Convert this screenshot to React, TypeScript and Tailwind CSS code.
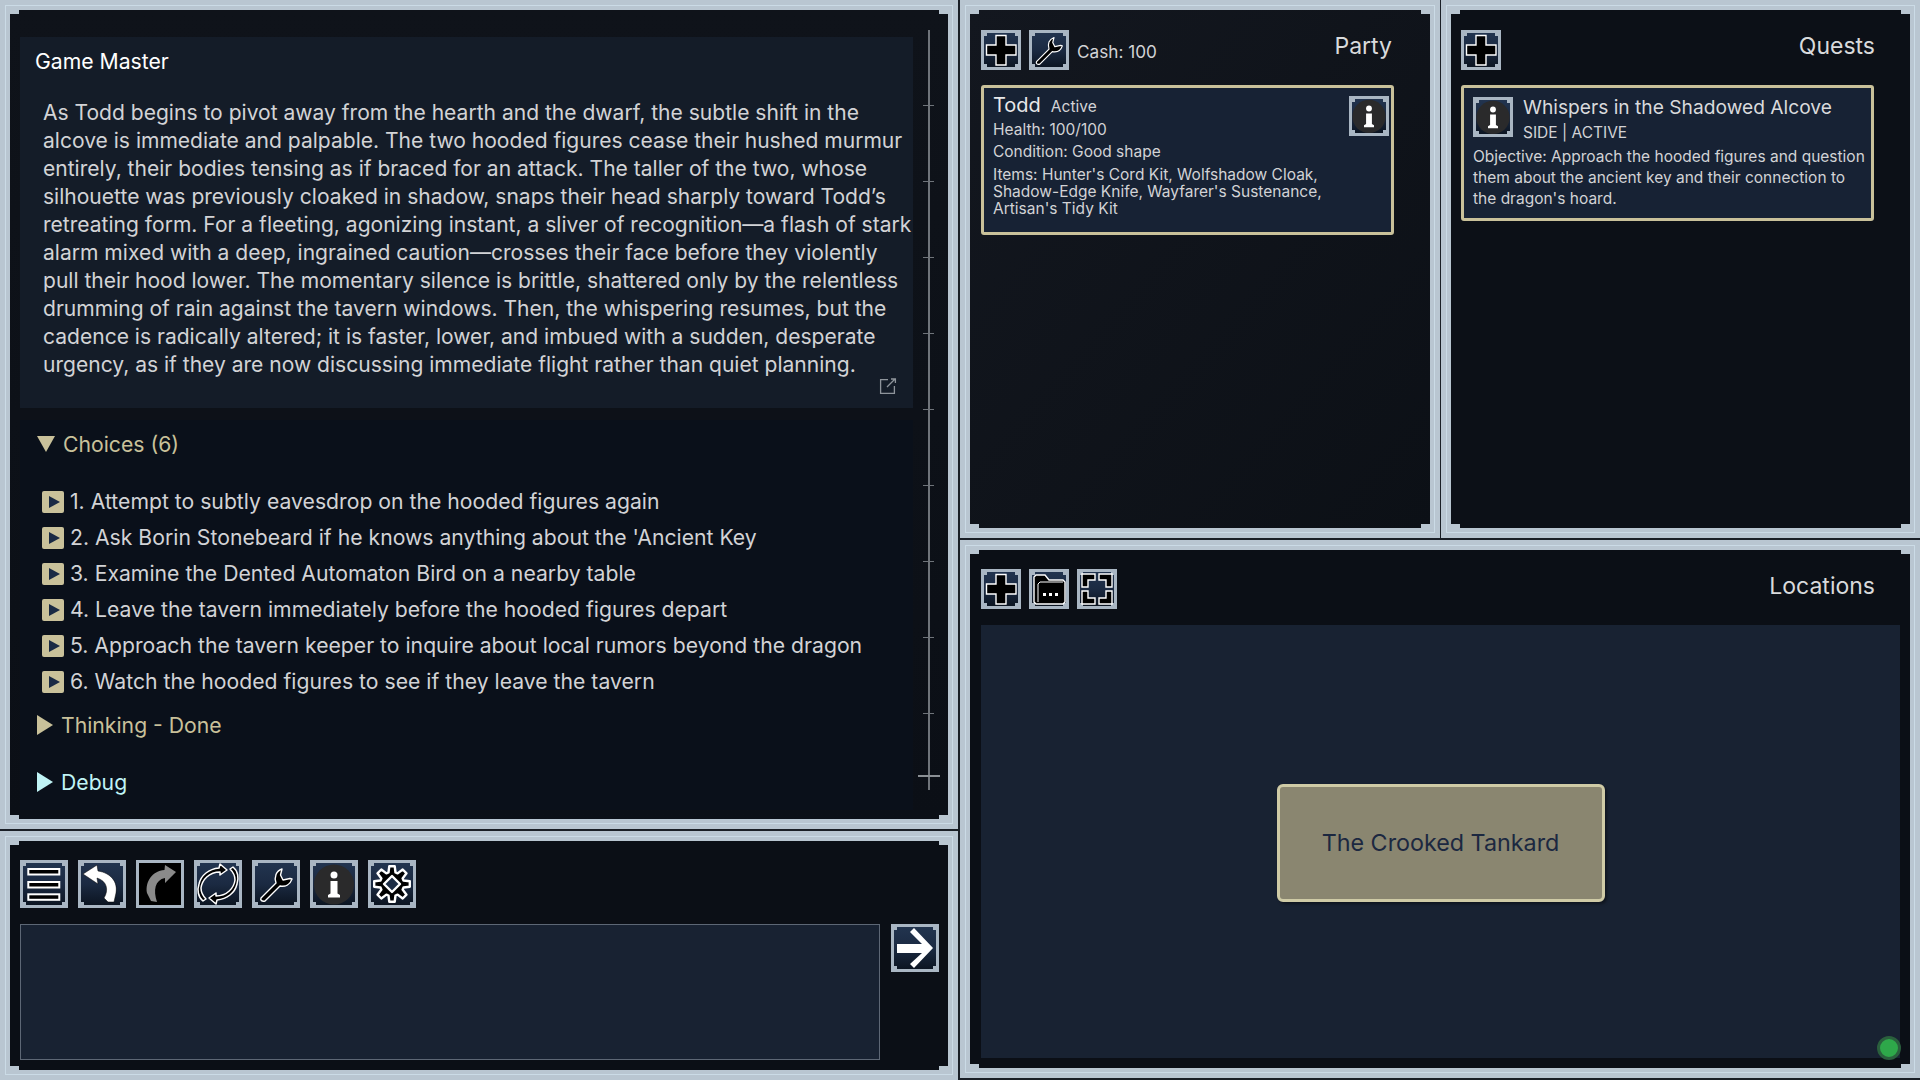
import React from "react"

const FONT = "font-['Inter','Noto_Sans',sans-serif]"

const storyLines = [
  "As Todd begins to pivot away from the hearth and the dwarf, the subtle shift in the",
  "alcove is immediate and palpable. The two hooded figures cease their hushed murmur",
  "entirely, their bodies tensing as if braced for an attack. The taller of the two, whose",
  "silhouette was previously cloaked in shadow, snaps their head sharply toward Todd’s",
  "retreating form. For a fleeting, agonizing instant, a sliver of recognition—a flash of stark",
  "alarm mixed with a deep, ingrained caution—crosses their face before they violently",
  "pull their hood lower. The momentary silence is brittle, shattered only by the relentless",
  "drumming of rain against the tavern windows. Then, the whispering resumes, but the",
  "cadence is radically altered; it is faster, lower, and imbued with a sudden, desperate",
  "urgency, as if they are now discussing immediate flight rather than quiet planning.",
]

const choices = [
  "1. Attempt to subtly eavesdrop on the hooded figures again",
  "2. Ask Borin Stonebeard if he knows anything about the 'Ancient Key",
  "3. Examine the Dented Automaton Bird on a nearby table",
  "4. Leave the tavern immediately before the hooded figures depart",
  "5. Approach the tavern keeper to inquire about local rumors beyond the dragon",
  "6. Watch the hooded figures to see if they leave the tavern",
]

function PlusIcon() {
  return (
    <svg viewBox="0 0 40 40" className="w-full h-full">
      <path d="M15 5.500h10v9.500h10v10H25v10H15v-10H5.500V15H15z" fill="#000" stroke="#fff" strokeWidth="1.400" />
    </svg>
  )
}

function WrenchIcon() {
  return (
    <svg viewBox="0 0 48 48" className="w-full h-full">
      <path d="M9 38L24 23C22 17 24 11 30 9L28.500 15L31 20L38 18.500L40 19C38 25 33 27 28 26L13 41C10 42 8 40 9 38z" fill="#000" stroke="#fff" strokeWidth="1.400" strokeLinejoin="round" />
    </svg>
  )
}

function InfoIcon() {
  return (
    <svg viewBox="0 0 48 48" className="w-full h-full">
      <circle cx="24" cy="24.500" r="20" fill="#2a2a2b" />
      <circle cx="24" cy="15" r="3.500" fill="#fff" />
      <path d="M20.500 21h7v12.500l2.500 1.500v2.500H18V35l2.500-1.500z" fill="#fff" />
    </svg>
  )
}

function MenuIcon() {
  return (
    <svg viewBox="0 0 48 48" className="w-full h-full">
      {[9, 22, 34.3].map((y) => (
        <rect key={y} x="8.300" y={y} width="31" height="5.500" fill="#000" stroke="#fff" strokeWidth="2" />
      ))}
    </svg>
  )
}

function UndoIcon() {
  return (
    <svg viewBox="0 0 48 48" className="w-full h-full">
      <path d="M5 14L19 5L20 11C33 13 40 22 38 33L36 42L30 42L26 38C31 30 29 21 19 18L20 24z" fill="#fff" stroke="#000" strokeWidth="0.500" />
    </svg>
  )
}

function RedoIcon() {
  return (
    <svg viewBox="0 0 48 48" className="w-full h-full">
      <path d="M40 12L29 5L28.500 10C16 11 9 22 11 33L15 41L21 42C17 30 19 20 29 18L29 23z" fill="#8a8a8a" />
    </svg>
  )
}

function RefreshIcon() {
  return (
    <svg viewBox="0 0 48 48" className="w-full h-full">
      <path d="M26 4l7 6-7 5v-3C15 12 8 20 7 28c0 4 2 8 5 11l-3 2C4 37 3 30 5 24 7 15 15 9 25 8z" fill="#000" stroke="#fff" strokeWidth="1.500" strokeLinejoin="round" />
      <path d="M22 44l-7-6 7-5v3c11 0 18-8 19-16 0-4-2-8-5-11l3-2c5 4 6 11 4 17-2 9-10 15-20 16z" fill="#000" stroke="#fff" strokeWidth="1.500" strokeLinejoin="round" />
    </svg>
  )
}

// eight tooth cog outline, points worked out from the angles
function gearPoints() {
  const pts: string[] = []
  for (let i = 0; i < 8; i++) {
    const a = (i * Math.PI) / 4 - Math.PI / 2
    const spots: [number, number][] = [[-0.3, 12], [-0.15, 18], [0.15, 18], [0.3, 12]]
    for (const [da, r] of spots) {
      pts.push(`${(24 + r * Math.cos(a + da)).toFixed(1)},${(24 + r * Math.sin(a + da)).toFixed(1)}`)
    }
  }
  return pts.join(" ")
}

function GearIcon() {
  return (
    <svg viewBox="0 0 48 48" className="w-full h-full">
      <polygon points={gearPoints()} fill="#000" stroke="#fff" strokeWidth="2.400" strokeLinejoin="round" />
      <path d="M24 16l8 8-8 8-8-8z" fill="#1d2d45" stroke="#fff" strokeWidth="2.400" strokeLinejoin="round" />
    </svg>
  )
}

function FolderIcon() {
  return (
    <svg viewBox="0 0 40 40" className="w-full h-full">
      <path d="M5 33V8l2-2h9l4 5h14l2 2v20l-2 2H7z" fill="#000" stroke="#fff" strokeWidth="1.400" />
      <path d="M9 33V15l2-2h23" fill="none" stroke="#fff" strokeWidth="1" />
      <rect x="14" y="24" width="3" height="3" fill="#fff" />
      <rect x="20" y="24" width="3" height="3" fill="#fff" />
      <rect x="26" y="24" width="3" height="3" fill="#fff" />
    </svg>
  )
}

function FocusIcon() {
  return (
    <svg viewBox="0 0 40 40" className="w-full h-full">
      <g fill="#000" stroke="#fff" strokeWidth="1.400">
        <path d="M5 5h13v6h-7v7H5z" />
        <path d="M35 5H22v6h7v7h6z" />
        <path d="M5 35h13v-6h-7v-7H5z" />
        <path d="M35 35H22v-6h7v-7h6z" />
      </g>
    </svg>
  )
}

function ArrowIcon() {
  return (
    <svg viewBox="0 0 48 48" className="w-full h-full">
      <path d="M6 20h25L19 8l4-4 19 20-19 20-4-4 12-11H6z" fill="#fff" />
    </svg>
  )
}

function IconButton({ children, size = "w-[48px] h-[48px]", dark = false }: { children: React.ReactNode; size?: string; dark?: boolean }) {
  return (
    <div className={`relative shrink-0 ${size} border-[3px] border-[#a9b6c3] ${dark ? "bg-black" : "bg-gradient-to-b from-[#22344f] via-[#1b2a42] to-[#0c1522]"}`}>
      {!dark && (
        <>
          <span className="absolute left-0 top-0 w-[3px] h-[3px] bg-[#a9b6c3]" />
          <span className="absolute right-0 top-0 w-[3px] h-[3px] bg-[#a9b6c3]" />
          <span className="absolute left-0 bottom-0 w-[3px] h-[3px] bg-[#a9b6c3]" />
          <span className="absolute right-0 bottom-0 w-[3px] h-[3px] bg-[#a9b6c3]" />
        </>
      )}
      <div className="absolute inset-[-3px]">{children}</div>
    </div>
  )
}

// light frame with stepped inner corners
function Panel({ className = "", children }: { className?: string; children: React.ReactNode }) {
  return (
    <div className={`relative border-[10px] border-[#b9c6d1] ${className}`}>
      <div className="absolute inset-[-5px] border border-[#cbdbe6] pointer-events-none" />
      <span className="absolute left-0 top-0 w-[9px] h-[4px] bg-[#b9c6d1]" />
      <span className="absolute right-0 top-0 w-[9px] h-[4px] bg-[#b9c6d1]" />
      <span className="absolute left-0 bottom-0 w-[9px] h-[4px] bg-[#b9c6d1]" />
      <span className="absolute right-0 bottom-0 w-[9px] h-[4px] bg-[#b9c6d1]" />
      {children}
    </div>
  )
}

function ScrollRail() {
  const ticks = [105, 181, 257, 333, 409, 485, 561, 637, 713]
  return (
    <div className="absolute left-[918px] top-[20px] w-[2px] h-[760px] bg-[#6f747a]">
      {ticks.map((y) => (
        <span key={y} className="absolute left-[-5px] w-[11px] h-[1px] bg-[#6f747a]" style={{ top: y - 30 }} />
      ))}
      <span className="absolute left-[-10px] top-[745px] w-[22px] h-[2px] bg-[#8a8f94]" />
    </div>
  )
}

export default function App() {
  return (
    <div className={`w-[1920px] h-[1080px] overflow-hidden bg-[#1a1f26] grid grid-cols-[958px_960px] gap-x-[2px] ${FONT}`}>
      {/* Left column */}
      <div className="flex flex-col gap-[2px] h-[1080px]">
        <Panel className="h-[829px] bg-gradient-to-b from-[#0f131a] to-[#0b0f16]">
          <div className="pl-[10px] pt-[27px]">
            <div className="w-[893px] h-[371px] bg-[#141c28] pl-[15px] pr-[2px]">
              <div className="pt-[9px] text-[21.2px] leading-[30px] text-white">Game Master</div>
              <p className="mt-[23px] pl-[8px] w-[876px] whitespace-nowrap text-[21.05px] leading-[28px] text-[#d2d3d6]">
                {storyLines.map((line) => (
                  <span key={line} className="block">{line}</span>
                ))}
              </p>
              <div className="flex justify-end pr-[14px] mt-[-2px]">
                <svg viewBox="0 0 18 18" className="w-[18px] h-[18px]" fill="none" stroke="#8e949b" strokeWidth="1.300">
                  <path d="M9 2.600H1.600v13.800h13.800V9" />
                  <path d="M8 10l8-8M12 2h4.400v4" />
                </svg>
              </div>
            </div>
            <div className="mt-[12px] w-[893px] h-[390px] bg-[#0a101a] pl-[16px]">
              <div className="flex items-center gap-[8px] pt-[10px] text-[21.2px] leading-[28px] text-[#c9c19a]">
                <span className="w-0 h-0 ml-[1px] border-x-[9px] border-x-transparent border-t-[16px] border-t-[#c9c19a]" />
                Choices (6)
              </div>
              <div className="mt-[30px] flex flex-col gap-[8px] pl-[6px]">
                {choices.map((c) => (
                  <div key={c} className="flex items-center h-[28px] gap-[6px] text-[21.2px] text-[#d2d3d6]">
                    <span className="flex items-center justify-center w-[22px] h-[22px] rounded-[2px] bg-[#c9c19a] shrink-0">
                      <span className="w-0 h-0 ml-[2px] border-y-[6px] border-y-transparent border-l-[11px] border-l-[#1a2a44]" />
                    </span>
                    {c}
                  </div>
                ))}
              </div>
              <div className="flex items-center gap-[8px] mt-[15px] text-[21.2px] leading-[28px] text-[#c9c19a]">
                <span className="w-0 h-0 ml-[1px] border-y-[10px] border-y-transparent border-l-[16px] border-l-[#c9c19a]" />
                Thinking - Done
              </div>
              <div className="flex items-center gap-[8px] mt-[29px] text-[21.2px] leading-[28px] text-[#c0f4f6]">
                <span className="w-0 h-0 ml-[1px] border-y-[10px] border-y-transparent border-l-[16px] border-l-[#c0f4f6]" />
                Debug
              </div>
            </div>
          </div>
          <ScrollRail />
        </Panel>
        <Panel className="h-[249px] bg-[#0b0f16]">
          <div className="pl-[10px] pt-[19px]">
            <div className="flex gap-[10px]">
              <IconButton><MenuIcon /></IconButton>
              <IconButton><UndoIcon /></IconButton>
              <IconButton dark><RedoIcon /></IconButton>
              <IconButton><RefreshIcon /></IconButton>
              <IconButton><WrenchIcon /></IconButton>
              <IconButton><InfoIcon /></IconButton>
              <IconButton><GearIcon /></IconButton>
            </div>
            <div className="flex gap-[11px] mt-[16px]">
              <div className="w-[860px] h-[136px] bg-[#182232] border border-[#5d6775]" />
              <IconButton><ArrowIcon /></IconButton>
            </div>
          </div>
        </Panel>
      </div>

      {/* Right column */}
      <div className="flex flex-col gap-[2px] h-[1078px]">
        <div className="grid grid-cols-[480px_479px] gap-x-[1px] h-[538px]">
          <Panel className="bg-gradient-to-br from-[#13171f] to-[#0c1016]">
            <div className="pl-[11px] pr-[38px] pt-[20px]">
              <div className="flex items-start">
                <div className="flex items-center gap-[8px]">
                  <IconButton size="w-[40px] h-[40px]"><PlusIcon /></IconButton>
                  <IconButton size="w-[40px] h-[40px]"><WrenchIcon /></IconButton>
                  <span className="text-[17.2px] text-[#d2d3d6] mt-[3px]">Cash: 100</span>
                </div>
                <span className="ml-auto mt-[1px] text-[23px] leading-[30px] text-[#d9dadc]">Party</span>
              </div>
              <div className="relative mt-[15px] w-[413px] h-[150px] rounded-[3px] border-[3px] border-[#c9c19a] bg-[#172234] pl-[9px] pt-[4px] text-[#d2d3d6]">
                <div className="flex items-baseline gap-[10px]">
                  <span className="text-[20px] leading-[27px] text-[#e8e8ea]">Todd</span>
                  <span className="text-[15.5px]">Active</span>
                </div>
                <div className="text-[15.5px] leading-[22px]">Health: 100/100</div>
                <div className="text-[15.5px] leading-[22px]">Condition: Good shape</div>
                <div className="text-[15.5px] leading-[17px] mt-[3px] w-[345px]">Items: Hunter's Cord Kit, Wolfshadow Cloak, Shadow-Edge Knife, Wayfarer's Sustenance, Artisan's Tidy Kit</div>
                <div className="absolute right-[2px] top-[8px]">
                  <IconButton size="w-[40px] h-[40px]"><InfoIcon /></IconButton>
                </div>
              </div>
            </div>
          </Panel>
          <Panel className="bg-[#0c1017]">
            <div className="pl-[10px] pr-[35px] pt-[20px]">
              <div className="flex items-start">
                <IconButton size="w-[40px] h-[40px]"><PlusIcon /></IconButton>
                <span className="ml-auto mt-[1px] text-[23px] leading-[30px] text-[#d9dadc]">Quests</span>
              </div>
              <div className="mt-[15px] w-[413px] h-[136px] rounded-[3px] border-[3px] border-[#c9c19a] bg-[#172234] pl-[9px] text-[#d2d3d6]">
                <div className="flex gap-[10px] pt-[9px]">
                  <IconButton size="w-[40px] h-[40px]"><InfoIcon /></IconButton>
                  <div className="mt-[-3px]">
                    <div className="text-[19.2px] leading-[26px] text-[#d9dadc]">Whispers in the Shadowed Alcove</div>
                    <div className="text-[15.5px] leading-[24px] mt-[1px]">SIDE | ACTIVE</div>
                  </div>
                </div>
                <div className="text-[15.5px] leading-[21px] mt-[1px] whitespace-nowrap">
                  Objective: Approach the hooded figures and question<br />them about the ancient key and their connection to<br />the dragon's hoard.
                </div>
              </div>
            </div>
          </Panel>
        </div>
        <Panel className="h-[538px] bg-[#0b0f16]">
          <div className="pl-[11px] pr-[10px] pt-[19px]">
            <div className="flex items-start pr-[25px]">
              <div className="flex gap-[8px]">
                <IconButton size="w-[40px] h-[40px]"><PlusIcon /></IconButton>
                <IconButton size="w-[40px] h-[40px]"><FolderIcon /></IconButton>
                <IconButton size="w-[40px] h-[40px]"><FocusIcon /></IconButton>
              </div>
              <span className="ml-auto text-[23px] leading-[30px] text-[#d9dadc] mt-[2px]">Locations</span>
            </div>
            <div className="relative mt-[16px] w-[919px] h-[433px] bg-[#182232] flex items-center justify-center">
              <div className="mt-[2px] pt-[2px] w-[328px] h-[118px] rounded-[6px] border-[3px] border-[#cfcba6] bg-[#8a8670] shadow-[2px_2px_3px_rgba(0,0,0,0.4)] flex items-center justify-center text-[23.3px] text-[#1c2840]">
                The Crooked Tankard
              </div>
              <span className="absolute left-[896px] top-[411px] w-[24px] h-[24px] rounded-full bg-[#2ea84a] border-[3px] border-[#2a5f3d]" />
            </div>
          </div>
        </Panel>
      </div>
    </div>
  )
}
